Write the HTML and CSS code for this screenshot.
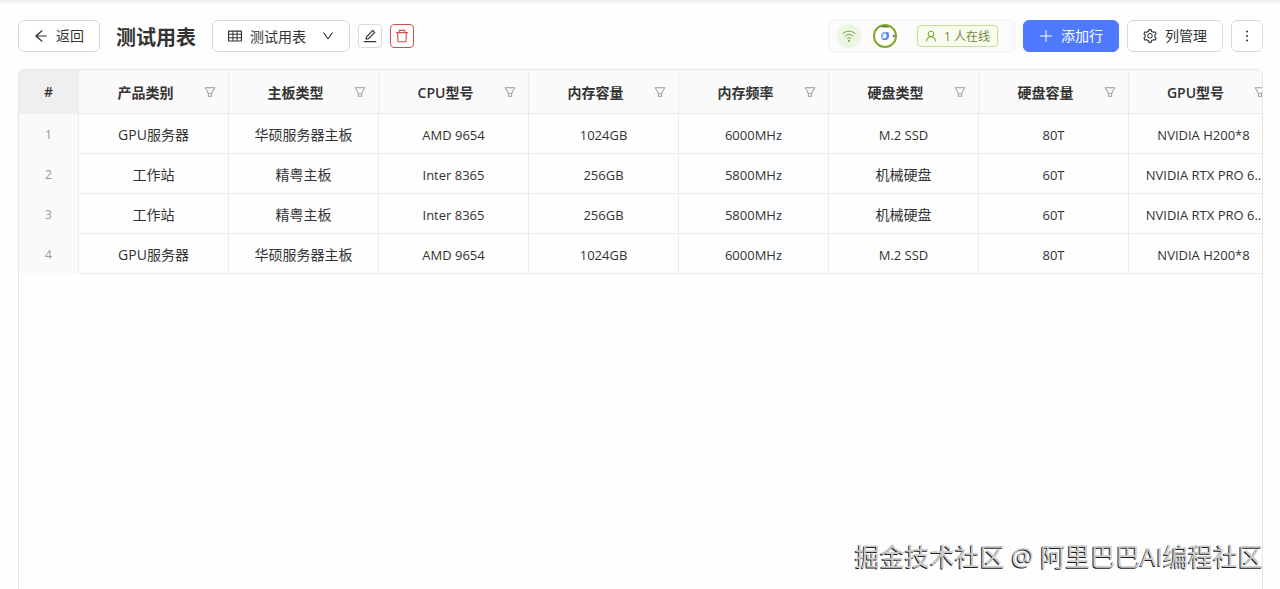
FILE: index.html
```html
<!DOCTYPE html>
<html lang="zh-CN">
<head>
  <meta charset="UTF-8" />
  <title>测试用表</title>
  <meta name="viewport" content="width=device-width, initial-scale=1.0" />
  <link rel="stylesheet" href="styles.css">
</head>
<body>
  <svg class="sprite" aria-hidden="true">
    <symbol id="icon-filter" viewBox="64 64 896 896">
      <path d="M880.1 154H143.9c-24.5 0-39.8 26.7-27.5 48L349 597.4V838c0 17.7 14.2 32 31.8 32h262.4c17.6 0 31.8-14.3 31.8-32V597.4L907.7 202c12.2-21.3-3.1-48-27.6-48zM603.4 798H420.6V642h182.9v156zm9.6-236.6l-9.5 16.6h-183l-9.5-16.6L212.7 226h598.6L613 561.4z"/>
    </symbol>
  </svg>

  <header class="toolbar">
    <button class="btn" type="button">
      <svg class="icon" viewBox="64 64 896 896"><path d="M872 474H286.9l350.2-304c5.6-4.9 2.2-14-5.2-14h-88.5c-3.9 0-7.6 1.4-10.5 3.9L155 487.8a31.96 31.96 0 000 48.3L535.1 866c1.5 1.3 3.3 2 5.2 2h91.5c7.4 0 10.8-9.2 5.2-14L286.9 550H872c4.4 0 8-3.6 8-8v-60c0-4.4-3.6-8-8-8z"/></svg>
      返回
    </button>
    <h1 class="title">测试用表</h1>
    <div class="sheet-tools">
      <div class="sheet-picker">
        <svg class="icon" viewBox="64 64 896 896"><path d="M928 160H96c-17.7 0-32 14.3-32 32v640c0 17.7 14.3 32 32 32h832c17.7 0 32-14.3 32-32V192c0-17.7-14.3-32-32-32zm-40 208H676V232h212v136zm0 224H676V432h212v160zM412 432h200v160H412V432zm200-64H412V232h200v136zm-476 64h212v160H136V432zm0-200h212v136H136V232zm0 424h212v136H136V656zm276 0h200v136H412V656zm476 136H676V656h212v136z"/></svg>
        <select class="sheet-select" aria-label="数据表">
          <option>测试用表</option>
        </select>
        <svg class="icon icon-down" viewBox="64 64 896 896"><path d="M884 256h-75c-5.1 0-9.9 2.5-12.9 6.6L512 654.2 227.9 262.6c-3-4.1-7.8-6.6-12.9-6.6h-75c-6.5 0-10.3 7.4-6.5 12.7l352.6 486.1c12.8 17.6 39 17.6 51.7 0l352.6-486.1c3.9-5.3.1-12.7-6.4-12.7z"/></svg>
      </div>
      <button class="btn btn-small" type="button" aria-label="编辑">
        <svg class="icon" viewBox="64 64 896 896"><path d="M257.7 752c2 0 4-.2 6-.5L431.9 722c2-.4 3.9-1.3 5.3-2.8l423.9-423.9a9.96 9.96 0 000-14.1L694.9 114.9c-1.9-1.9-4.4-2.9-7.1-2.9s-5.2 1-7.1 2.9L256.8 538.8c-1.5 1.5-2.4 3.3-2.8 5.3l-29.5 168.2a33.5 33.5 0 009.4 29.8c6.6 6.4 14.9 9.9 23.8 9.9zm67.4-174.4L687.8 215l73.3 73.3-362.7 362.6-88.9 15.7 15.6-89zM880 836H144c-17.7 0-32 14.3-32 32v36c0 4.4 3.6 8 8 8h784c4.4 0 8-3.6 8-8v-36c0-17.7-14.3-32-32-32z"/></svg>
      </button>
      <button class="btn btn-small btn-danger" type="button" aria-label="删除">
        <svg class="icon" viewBox="64 64 896 896"><path d="M360 184h-8c4.4 0 8-3.6 8-8v8h304v-8c0 4.4 3.6 8 8 8h-8v72h72v-80c0-35.3-28.7-64-64-64H352c-35.3 0-64 28.7-64 64v80h72v-72zm504 72H160c-17.7 0-32 14.3-32 32v32c0 4.4 3.6 8 8 8h60.4l24.7 523c1.6 34.1 29.8 61 63.9 61h454c34.2 0 62.3-26.8 63.9-61l24.7-523H888c4.4 0 8-3.6 8-8v-32c0-17.7-14.3-32-32-32zM731.3 840H292.7l-24.2-512h487l-24.2 512z"/></svg>
      </button>
    </div>

    <div class="actions">
      <div class="presence">
        <span class="wifi">
          <svg class="icon-wifi" viewBox="0 0 16 16"><path d="M1.5 5.8C5.2 2.4 10.8 2.4 14.5 5.8M3.6 8.3C6.1 6 9.9 6 12.4 8.3M5.8 10.7C7.1 9.6 8.9 9.6 10.2 10.7"/><circle cx="8" cy="12.8" r="1.1"/></svg>
        </span>
        <span class="avatar">
          <svg viewBox="0 0 24 24">
            <circle cx="12" cy="12" r="11" fill="#fff"/>
            <path d="M8 2.6h8" stroke="#4d6350" stroke-width="1.5"/>
            <path d="M10 8h4l-1.5 2h-2v3L8 14.5V10z" fill="#8fb4f7"/>
            <path d="M12.5 8H15l1 1.5V13l-2 3H9.500l-1-1.500 4-.5 1-1.500z" fill="#5d8df2"/>
            <circle cx="20.8" cy="12" r="1.2" fill="#6c7a9a"/>
            <circle cx="12" cy="12" r="11" fill="none" stroke="#83a92c" stroke-width="2"/>
          </svg>
        </span>
        <span class="online">
          <svg class="icon-user" viewBox="64 64 896 896"><path d="M858.5 763.6a374 374 0 00-80.6-119.5 375.63 375.63 0 00-119.5-80.6c-.4-.2-.8-.3-1.2-.5C719.5 518 760 444.7 760 362c0-137-111-248-248-248S264 225 264 362c0 82.7 40.5 156 102.8 201.1-.4.2-.8.3-1.2.5-44.8 18.9-85 46-119.5 80.6a375.63 375.63 0 00-80.6 119.5A371.7 371.7 0 00136 901.8a8 8 0 008 8.2h60c4.4 0 7.9-3.5 8-7.8 2-77.2 33-149.5 87.8-204.3 56.7-56.7 132-87.9 212.2-87.9s155.5 31.2 212.2 87.9C779 752.7 810 825 812 902.2c.1 4.4 3.6 7.8 8 7.8h60a8 8 0 008-8.2c-1-47.8-10.9-94.3-29.5-138.2zM512 534c-45.9 0-89.1-17.9-121.6-50.4S340 407.9 340 362c0-45.9 17.9-89.1 50.4-121.6S466.1 190 512 190s89.1 17.9 121.6 50.4S684 316.1 684 362c0 45.9-17.9 89.1-50.4 121.6S557.9 534 512 534z"/></svg>
          1 人在线
        </span>
      </div>
      <button class="btn btn-primary" type="button">
        <svg class="icon" viewBox="0 0 14 14"><path d="M6.5 1h1v5.5H13v1H7.5V13h-1V7.5H1v-1h5.5z"/></svg>
        添加行
      </button>
      <button class="btn" type="button">
        <svg class="icon" viewBox="64 64 896 896"><path d="M924.8 625.7l-65.5-56c3.1-19 4.7-38.4 4.7-57.8s-1.6-38.8-4.7-57.8l65.5-56a32.03 32.03 0 009.3-35.2l-.9-2.6a443.74 443.74 0 00-79.7-137.9l-1.8-2.1a32.12 32.12 0 00-35.1-9.5l-81.3 28.9c-30-24.6-63.5-44-99.7-57.6l-15.7-85a32.05 32.05 0 00-25.8-25.7l-2.7-.5c-52.1-9.4-106.9-9.4-159 0l-2.7.5a32.05 32.05 0 00-25.8 25.7l-15.8 85.4a351.86 351.86 0 00-99 57.4l-81.9-29.1a32 32 0 00-35.1 9.5l-1.8 2.1a446.02 446.02 0 00-79.7 137.9l-.9 2.6c-4.5 12.5-.8 26.5 9.3 35.2l66.3 56.6c-3.1 18.8-4.6 38-4.6 57.1 0 19.2 1.5 38.4 4.6 57.1L99 625.5a32.03 32.03 0 00-9.3 35.2l.9 2.6c18.1 50.4 44.9 96.9 79.7 137.9l1.8 2.1a32.12 32.12 0 0035.1 9.5l81.9-29.1c29.8 24.5 63.1 43.9 99 57.4l15.8 85.4a32.05 32.05 0 0025.8 25.7l2.7.5a449.4 449.4 0 00159 0l2.7-.5a32.05 32.05 0 0025.8-25.7l15.7-85a350 350 0 0099.7-57.6l81.3 28.9a32 32 0 0035.1-9.5l1.8-2.1c34.8-41.1 61.6-87.5 79.7-137.9l.9-2.6c4.5-12.3.8-26.3-9.3-35zM788.3 465.9c2.5 15.1 3.8 30.6 3.8 46.1s-1.3 31-3.8 46.1l-6.6 40.1 74.7 63.9a370.03 370.03 0 01-42.6 73.6L721 702.8l-31.4 25.8c-23.9 19.6-50.5 35-79.3 45.8l-38.1 14.3-17.9 97a377.5 377.5 0 01-85 0l-17.9-97.2-37.8-14.5c-28.5-10.8-55-26.2-78.7-45.7l-31.4-25.9-93.4 33.2c-17-22.9-31.2-47.6-42.6-73.6l75.5-64.5-6.5-40c-2.4-14.9-3.7-30.3-3.7-45.5 0-15.3 1.2-30.6 3.7-45.5l6.5-40-75.5-64.5c11.3-26.1 25.6-50.7 42.6-73.6l93.4 33.2 31.4-25.9c23.7-19.5 50.2-34.9 78.7-45.7l37.9-14.3 17.9-97.2c28.1-3.2 56.8-3.2 85 0l17.9 97 38.1 14.3c28.7 10.8 55.4 26.2 79.3 45.8l31.4 25.8 92.8-32.9c17 22.9 31.2 47.6 42.6 73.6L781.8 426l6.5 39.9zM512 326c-97.2 0-176 78.8-176 176s78.8 176 176 176 176-78.8 176-176-78.8-176-176-176zm79.2 255.2A111.6 111.6 0 01512 614c-29.9 0-58-11.7-79.2-32.8A111.6 111.6 0 01400 502c0-29.9 11.7-58 32.8-79.2C454 401.6 482.1 390 512 390c29.9 0 58 11.6 79.2 32.8A111.6 111.6 0 01624 502c0 29.9-11.7 58-32.8 79.2z"/></svg>
        列管理
      </button>
      <button class="btn btn-icon" type="button" aria-label="更多">
        <svg class="icon" viewBox="0 0 14 14"><circle cx="7" cy="2.5" r="1"/><circle cx="7" cy="7" r="1"/><circle cx="7" cy="11.5" r="1"/></svg>
      </button>
    </div>
  </header>

  <main class="grid">
    <table class="sheet">
      <colgroup>
        <col class="col-index">
        <col span="8">
      </colgroup>
      <thead>
        <tr>
          <th class="index">#</th>
          <th><div class="head"><span>产品类别</span><button class="filter" type="button" aria-label="筛选产品类别"><svg><use href="#icon-filter"/></svg></button></div></th>
          <th><div class="head"><span>主板类型</span><button class="filter" type="button" aria-label="筛选主板类型"><svg><use href="#icon-filter"/></svg></button></div></th>
          <th><div class="head"><span>CPU型号</span><button class="filter" type="button" aria-label="筛选CPU型号"><svg><use href="#icon-filter"/></svg></button></div></th>
          <th><div class="head"><span>内存容量</span><button class="filter" type="button" aria-label="筛选内存容量"><svg><use href="#icon-filter"/></svg></button></div></th>
          <th><div class="head"><span>内存频率</span><button class="filter" type="button" aria-label="筛选内存频率"><svg><use href="#icon-filter"/></svg></button></div></th>
          <th><div class="head"><span>硬盘类型</span><button class="filter" type="button" aria-label="筛选硬盘类型"><svg><use href="#icon-filter"/></svg></button></div></th>
          <th><div class="head"><span>硬盘容量</span><button class="filter" type="button" aria-label="筛选硬盘容量"><svg><use href="#icon-filter"/></svg></button></div></th>
          <th><div class="head"><span>GPU型号</span><button class="filter" type="button" aria-label="筛选GPU型号"><svg><use href="#icon-filter"/></svg></button></div></th>
        </tr>
      </thead>
      <tbody>
        <tr>
          <td class="index">1</td>
          <td>GPU服务器</td>
          <td>华硕服务器主板</td>
          <td class="latin">AMD 9654</td>
          <td class="latin">1024GB</td>
          <td class="latin">6000MHz</td>
          <td class="latin">M.2 SSD</td>
          <td class="latin">80T</td>
          <td class="latin">NVIDIA H200*8</td>
        </tr>
        <tr>
          <td class="index">2</td>
          <td>工作站</td>
          <td>精粤主板</td>
          <td class="latin">Inter 8365</td>
          <td class="latin">256GB</td>
          <td class="latin">5800MHz</td>
          <td>机械硬盘</td>
          <td class="latin">60T</td>
          <td class="latin">NVIDIA RTX PRO 6..</td>
        </tr>
        <tr>
          <td class="index">3</td>
          <td>工作站</td>
          <td>精粤主板</td>
          <td class="latin">Inter 8365</td>
          <td class="latin">256GB</td>
          <td class="latin">5800MHz</td>
          <td>机械硬盘</td>
          <td class="latin">60T</td>
          <td class="latin">NVIDIA RTX PRO 6..</td>
        </tr>
        <tr>
          <td class="index">4</td>
          <td>GPU服务器</td>
          <td>华硕服务器主板</td>
          <td class="latin">AMD 9654</td>
          <td class="latin">1024GB</td>
          <td class="latin">6000MHz</td>
          <td class="latin">M.2 SSD</td>
          <td class="latin">80T</td>
          <td class="latin">NVIDIA H200*8</td>
        </tr>
      </tbody>
    </table>
  </main>

  <div class="watermark">掘金技术社区 @ 阿里巴巴AI编程社区</div>
</body>
</html>
```

FILE: styles.css
```css
* {
  box-sizing: border-box;
}

body {
  margin: 0;
  height: 100vh;
  padding: 19px 17px 0 18px;
  display: flex;
  flex-direction: column;
  gap: 16px;
  overflow: hidden;
  background: #fefefe linear-gradient(#ececec, #fefefe) no-repeat top / 100% 5px;
  color: #333;
  font-family: 'Open Sans', 'Noto Sans CJK SC', sans-serif;
  font-size: 14px;
}

button,
select {
  font: inherit;
  color: inherit;
}

.sprite {
  position: absolute;
  width: 0;
  height: 0;
}

.icon {
  width: 14px;
  height: 14px;
  fill: currentColor;
  flex: none;
}

/* Toolbar */

.toolbar {
  display: flex;
  align-items: center;
  height: 34px;
  gap: 16px;
  white-space: nowrap;
}

.btn {
  display: inline-flex;
  align-items: center;
  justify-content: center;
  gap: 8px;
  height: 32px;
  padding: 0 15px;
  background-color: #fff;
  border: 1px solid #d9d9d9;
  border-radius: 6px;
  line-height: 22px;
  cursor: pointer;
}

.btn-small {
  width: 24px;
  height: 24px;
  padding: 0;
  border-radius: 4px;
}

.btn-danger {
  color: #d0534e;
  border-color: #c9504c;
}

.btn-primary {
  background-color: #4e78fd;
  border-color: #4e78fd;
  color: #fff;
}

.btn-icon {
  width: 32px;
  padding: 0;
}

.title {
  margin: 0;
  padding-top: 4px;
  font-size: 20px;
  line-height: 28px;
  font-weight: bold;
}

.sheet-tools,
.actions {
  display: flex;
  align-items: center;
  gap: 8px;
}

.actions {
  margin-left: auto;
}

.sheet-picker {
  display: flex;
  align-items: center;
  gap: 8px;
  height: 32px;
  padding: 0 15px;
  background-color: #fff;
  border: 1px solid #d9d9d9;
  border-radius: 6px;
}

.sheet-select {
  appearance: none;
  padding: 0;
  border: none;
  background: transparent;
  cursor: pointer;
}

.icon-down {
  width: 12px;
  height: 12px;
  margin-left: 8px;
}

.presence {
  display: flex;
  align-items: center;
  height: 34px;
  padding: 0 16px 0 8px;
  background-color: #fbfbfb;
  border: 1px solid #f0f0f0;
  border-radius: 6px;
}

.wifi {
  display: flex;
  align-items: center;
  justify-content: center;
  width: 24px;
  height: 24px;
  border-radius: 50%;
  background-color: #edf5e3;
}

.icon-wifi {
  width: 16px;
  height: 16px;
  fill: none;
  stroke: #7aa82c;
}

.icon-wifi circle {
  fill: #7aa82c;
  stroke: none;
}

.avatar {
  display: flex;
  width: 24px;
  height: 24px;
  margin: 0 20px 0 12px;
}

.online {
  display: flex;
  align-items: center;
  gap: 7px;
  height: 22px;
  padding: 0 7px;
  background-color: #f9fdf0;
  border: 1px solid #c3df8e;
  border-radius: 4px;
  color: #72863f;
  font-size: 12px;
}

.icon-user {
  width: 12px;
  height: 12px;
  fill: #7ba52b;
}

/* Table */

.grid {
  flex: 1;
  overflow: hidden;
  border: 1px solid #e6e6e6;
  border-bottom: none;
  border-radius: 6px 6px 0 0;
}

.sheet {
  width: 1260px;
  table-layout: fixed;
  border-collapse: separate;
  border-spacing: 0;
  text-align: center;
}

.col-index {
  width: 60px;
}

.sheet th,
.sheet td {
  padding: 0 12px;
  border-right: 1px solid #ececec;
  border-bottom: 1px solid #ececec;
  overflow: hidden;
  white-space: nowrap;
}

.sheet th {
  height: 44px;
  background-color: #fafafa;
  font-weight: 600;
}

.sheet td {
  height: 40px;
}

.sheet td.latin {
  font-size: 13px;
}

.sheet th.index {
  background-color: #efefef;
}

.sheet td.index {
  background-color: #fafafa;
  border-bottom-color: #fafafa;
  color: #999;
  font-size: 12px;
}

.sheet td.latin,
.sheet td.index {
  padding-top: 2px;
}

.head {
  display: flex;
  align-items: center;
  gap: 4px;
}

.head span {
  flex: 1;
}

.filter {
  display: flex;
  padding: 0;
  border: none;
  background: transparent;
  color: #999;
  cursor: pointer;
}

.filter svg {
  width: 12px;
  height: 12px;
  fill: currentColor;
}

.watermark {
  position: absolute;
  right: 17px;
  bottom: 16px;
  font-size: 25px;
  line-height: 34px;
  color: #ccc;
  text-shadow: -1px 1px 0 #222;
  white-space: nowrap;
}
```
